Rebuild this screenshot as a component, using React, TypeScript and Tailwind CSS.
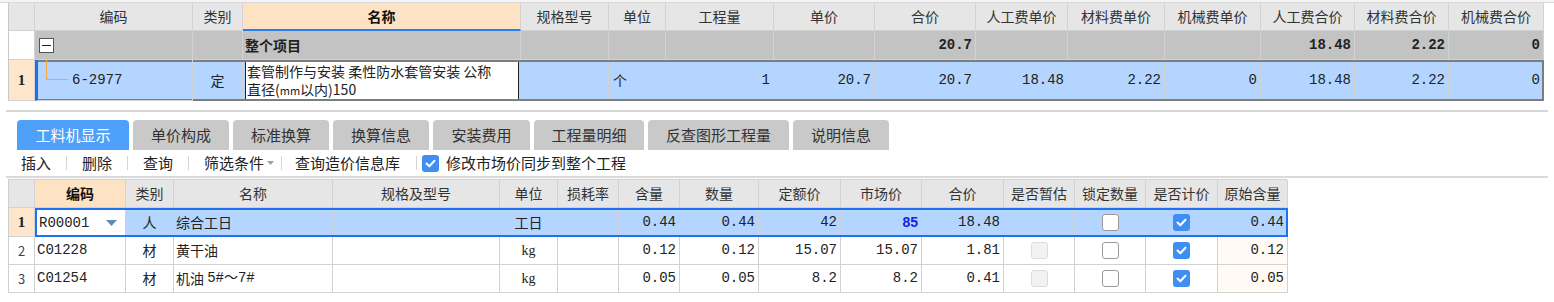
import React from 'react';

const CJK = "font-['Noto_Sans_CJK_SC','Noto_Sans',sans-serif]";
const MONO = "font-['Liberation_Mono','Noto_Sans_CJK_SC',monospace]";

const topCols =
  'grid grid-cols-[26px_158px_50px_278px_88px_57px_108px_101px_101px_92px_97px_96px_94px_94px_95px]';
const botCols =
  'grid grid-cols-[26px_91px_48px_159px_167px_58px_61px_61px_79px_82px_81px_82px_71px_71px_72px_70px]';

const cell = 'border-r border-b border-[#d2d2d2] flex items-center overflow-hidden whitespace-nowrap';

function Check({ kind }: { kind: 'on' | 'off' | 'disabled' }) {
  if (kind === 'on') {
    return (
      <div className="w-[17px] h-[17px] rounded-[3px] bg-[#3f8ef2] flex items-center justify-center">
        <svg width="11" height="9" viewBox="0 0 11 9">
          <path d="M1.5 4.5 L4.3 7.2 L9.5 1.8" stroke="white" strokeWidth="2" fill="none" strokeLinecap="round" strokeLinejoin="round" />
        </svg>
      </div>
    );
  }
  if (kind === 'disabled') {
    return <div className="w-[17px] h-[17px] rounded-[3px] bg-[#f2f2f2] border border-[#dcdcdc]" />;
  }
  return <div className="w-[17px] h-[17px] rounded-[3px] bg-white border border-[#9a9a9a]" />;
}

const topHeaders = ['编码', '类别', '名称', '规格型号', '单位', '工程量', '单价', '合价', '人工费单价', '材料费单价', '机械费单价', '人工费合价', '材料费合价', '机械费合价'];

const botHeaders = ['编码', '类别', '名称', '规格及型号', '单位', '损耗率', '含量', '数量', '定额价', '市场价', '合价', '是否暂估', '锁定数量', '是否计价', '原始含量'];

type Mat = {
  code: string;
  type: string;
  name: string;
  unit: string;
  qty: string;
  amount: string;
  base: string;
  market: string;
  total: string;
};

const mats: Mat[] = [
  { code: 'R00001', type: '人', name: '综合工日', unit: '工日', qty: '0.44', amount: '0.44', base: '42', market: '85', total: '18.48' },
  { code: 'C01228', type: '材', name: '黄干油', unit: 'kg', qty: '0.12', amount: '0.12', base: '15.07', market: '15.07', total: '1.81' },
  { code: 'C01254', type: '材', name: '机油 5#～7#', unit: 'kg', qty: '0.05', amount: '0.05', base: '8.2', market: '8.2', total: '0.41' },
];

const tabs = [
  { label: '工料机显示', w: 'w-[112px]' },
  { label: '单价构成', w: 'w-[96px]' },
  { label: '标准换算', w: 'w-[96px]' },
  { label: '换算信息', w: 'w-[96px]' },
  { label: '安装费用', w: 'w-[97px]' },
  { label: '工程量明细', w: 'w-[110px]' },
  { label: '反查图形工程量', w: 'w-[141px]' },
  { label: '说明信息', w: 'w-[96px]' },
];

export default function App() {
  return (
    <div className={`w-[1554px] h-[302px] bg-white text-[#222] ${CJK} overflow-hidden`}>
      {/* top strip */}
      <div className="h-[3px] bg-[#f4f4f4] border-b border-[#dadada]" />

      {/* upper table */}
      <div className="ml-[8px] w-[1535px] border-l border-[#c8c8c8]">
        <div className={`${topCols} h-[28px] text-[14px] text-[#333]`}>
          <div className={`${cell} bg-[#e6e6e6]`} />
          {topHeaders.map(h =>
            h === '名称' ? (
              <div key={h} className={`${cell} justify-center bg-[#fde3c3] font-bold text-[#111] border-b-2 border-b-[#2a7ef0]`}>
                {h}
              </div>
            ) : (
              <div key={h} className={`${cell} justify-center bg-[#e6e6e6]`}>
                {h}
              </div>
            )
          )}
        </div>

        <div className={`${topCols} h-[29px] text-[14px]`}>
          <div className={`${cell} bg-white`} />
          <div className={`${cell} bg-[#c3c3c3] pl-[4px]`}>
            <div className="w-[15px] h-[15px] bg-white border border-[#555] flex items-center justify-center">
              <div className="w-[9px] h-[1px] bg-[#222]" />
            </div>
          </div>
          <div className={`${cell} bg-[#c3c3c3]`} />
          <div className={`${cell} bg-[#c3c3c3] pl-[2px] font-bold`}>整个项目</div>
          <div className={`${cell} bg-[#c3c3c3]`} />
          <div className={`${cell} bg-[#c3c3c3]`} />
          <div className={`${cell} bg-[#c3c3c3]`} />
          <div className={`${cell} bg-[#c3c3c3]`} />
          <div className={`${cell} bg-[#c3c3c3] justify-end pr-[3px] font-bold ${MONO}`}>20.7</div>
          <div className={`${cell} bg-[#c3c3c3]`} />
          <div className={`${cell} bg-[#c3c3c3]`} />
          <div className={`${cell} bg-[#c3c3c3]`} />
          <div className={`${cell} bg-[#c3c3c3] justify-end pr-[3px] font-bold ${MONO}`}>18.48</div>
          <div className={`${cell} bg-[#c3c3c3] justify-end pr-[3px] font-bold ${MONO}`}>2.22</div>
          <div className={`${cell} bg-[#c3c3c3] justify-end pr-[3px] font-bold ${MONO}`}>0</div>
        </div>

        <div className={`${topCols} h-[41px] text-[14px]`}>
          <div className={`${cell} bg-[#fde6cc] justify-center font-bold font-['Liberation_Serif',serif] text-[15px]`}>1</div>
          <div className="col-span-14 grid grid-cols-[158px_50px_278px_88px_57px_108px_101px_101px_92px_97px_96px_94px_94px_95px] outline-2 -outline-offset-2 outline-[#7d7d7d] bg-[#b4d5ff]">
            <div className={`${cell} relative border-l-[3px] border-l-[#1f6fe5] pl-[34px] ${MONO}`}>
              <div className="absolute left-[8px] top-[-9px] w-[1px] h-[29px] bg-[#f2a93b]" />
              <div className="absolute left-[8px] top-[19px] w-[22px] h-[1px] bg-[#f2a93b]" />
              6-2977
            </div>
            <div className={`${cell} justify-center`}>定</div>
            <div className="border border-[#222] bg-white mx-[2px] my-[1px] px-[1px] text-[14px] leading-[18px] whitespace-nowrap overflow-hidden flex flex-col justify-center">
              <div>套管制作与安装 柔性防水套管安装 公称</div>
              <div>
                直径(<span className="text-[11px]">mm</span>以内)150
              </div>
            </div>
            <div className={cell} />
            <div className={`${cell} pl-[4px]`}>个</div>
            <div className={`${cell} justify-end pr-[3px] ${MONO}`}>1</div>
            <div className={`${cell} justify-end pr-[3px] ${MONO}`}>20.7</div>
            <div className={`${cell} justify-end pr-[3px] ${MONO}`}>20.7</div>
            <div className={`${cell} justify-end pr-[3px] ${MONO}`}>18.48</div>
            <div className={`${cell} justify-end pr-[3px] ${MONO}`}>2.22</div>
            <div className={`${cell} justify-end pr-[3px] ${MONO}`}>0</div>
            <div className={`${cell} justify-end pr-[3px] ${MONO}`}>18.48</div>
            <div className={`${cell} justify-end pr-[3px] ${MONO}`}>2.22</div>
            <div className={`${cell} justify-end pr-[3px] ${MONO}`}>0</div>
          </div>
        </div>
      </div>

      {/* separator */}
      <div className="h-[9px]" />
      <div className="h-[2px] bg-[#d6d6d6] mx-[6px]" />
      <div className="h-[8px]" />

      {/* tabs */}
      <div className="flex gap-[4px] pl-[17px] h-[30px]">
        {tabs.map((t, i) => (
          <div
            key={t.label}
            className={`${t.w} rounded-t-[4px] flex items-center justify-center text-[15px] ${
              i === 0 ? 'bg-[#4ea0f8] text-white' : 'bg-[#c9c9c9] text-[#333]'
            }`}
          >
            {t.label}
          </div>
        ))}
      </div>

      {/* toolbar */}
      <div className="h-[28px] flex items-center text-[15px] text-[#222] border-b-2 border-[#dadada] mx-[6px]">
        <span className="ml-[15px]">插入</span>
        <span className="mx-[15px] w-[1px] h-[14px] bg-[#d5d5d5]" />
        <span>删除</span>
        <span className="mx-[15px] w-[1px] h-[14px] bg-[#d5d5d5]" />
        <span>查询</span>
        <span className="mx-[15px] w-[1px] h-[14px] bg-[#d5d5d5]" />
        <span>筛选条件</span>
        <svg className="ml-[3px]" width="7" height="4" viewBox="0 0 7 4">
          <path d="M0 0 L7 0 L3.5 4 Z" fill="#a0a0a0" />
        </svg>
        <span className="ml-[7px] mr-[13px] w-[1px] h-[14px] bg-[#d5d5d5]" />
        <span>查询造价信息库</span>
        <span className="ml-[16px] w-[1px] h-[14px] bg-[#d5d5d5]" />
        <span className="ml-[5px]">
          <Check kind="on" />
        </span>
        <span className="ml-[7px]">修改市场价同步到整个工程</span>
      </div>

      {/* lower table */}
      <div className="ml-[8px] mt-[1px] w-[1279px] border-l border-t border-[#cfcfcf] text-[14px]">
        <div className={`${botCols} h-[28px] text-[#333]`}>
          <div className={`${cell} bg-[#e6e6e6]`} />
          {botHeaders.map(h =>
            h === '编码' ? (
              <div key={h} className={`${cell} justify-center bg-[#fde3c3] font-bold text-[#111]`}>
                {h}
              </div>
            ) : (
              <div key={h} className={`${cell} justify-center bg-[#e6e6e6]`}>
                {h}
              </div>
            )
          )}
        </div>

        {mats.map((m, i) => {
          const sel = i === 0;
          const body = (
            <>
              <div
                className={`${cell} justify-between ${MONO} pl-[2px] ${
                  sel ? 'bg-white border-2 border-[#1f72ee] pr-[8px]' : ''
                }`}
              >
                {m.code}
                {sel && (
                  <svg width="11" height="7" viewBox="0 0 11 7">
                    <path d="M0 0 L11 0 L5.5 6 Z" fill="#5e8fb3" />
                  </svg>
                )}
              </div>
              <div className={`${cell} justify-center`}>{m.type}</div>
              <div className={`${cell} pl-[2px]`}>
                {m.name === '机油 5#～7#' ? (
                  <>
                    机油&nbsp;<span className={`${MONO}`}>5#～7#</span>
                  </>
                ) : (
                  m.name
                )}
              </div>
              <div className={cell} />
              {m.unit === 'kg' ? (
                <div className={`${cell} justify-center font-['Liberation_Serif',serif] text-[14px]`}>kg</div>
              ) : (
                <div className={`${cell} justify-center`}>{m.unit}</div>
              )}
              <div className={cell} />
              <div className={`${cell} justify-end pr-[3px] ${MONO}`}>{m.qty}</div>
              <div className={`${cell} justify-end pr-[3px] ${MONO}`}>{m.amount}</div>
              <div className={`${cell} justify-end pr-[3px] ${MONO}`}>{m.base}</div>
              <div
                className={`${cell} justify-end pr-[3px] ${
                  sel ? "font-['Liberation_Sans',sans-serif] font-bold text-[#1622e6] text-[14px]" : MONO
                }`}
              >
                {m.market}
              </div>
              <div className={`${cell} justify-end pr-[3px] ${MONO}`}>{m.total}</div>
              <div className={`${cell} justify-center`}>{!sel && <Check kind="disabled" />}</div>
              <div className={`${cell} justify-center`}>
                <Check kind="off" />
              </div>
              <div className={`${cell} justify-center`}>
                <Check kind="on" />
              </div>
              <div className={`${cell} justify-end pr-[3px] ${MONO} ${sel ? '' : 'bg-[#fffaf4]'}`}>{m.qty}</div>
            </>
          );
          return (
            <div key={m.code} className={`${botCols} ${i === 0 ? 'h-[29px]' : 'h-[28px]'}`}>
              <div
                className={`${cell} justify-center ${
                  sel ? "bg-[#fde6cc] font-bold font-['Liberation_Serif',serif] text-[15px]" : 'bg-white text-[#444] text-[13px]'
                }`}
              >
                {i + 1}
              </div>
              {sel ? (
                <div className="col-span-15 grid grid-cols-[91px_48px_159px_167px_58px_61px_61px_79px_82px_81px_82px_71px_71px_72px_70px] bg-[#b4d5ff] outline-2 -outline-offset-2 outline-[#1f72ee]">
                  {body}
                </div>
              ) : (
                body
              )}
            </div>
          );
        })}
      </div>
    </div>
  );
}
